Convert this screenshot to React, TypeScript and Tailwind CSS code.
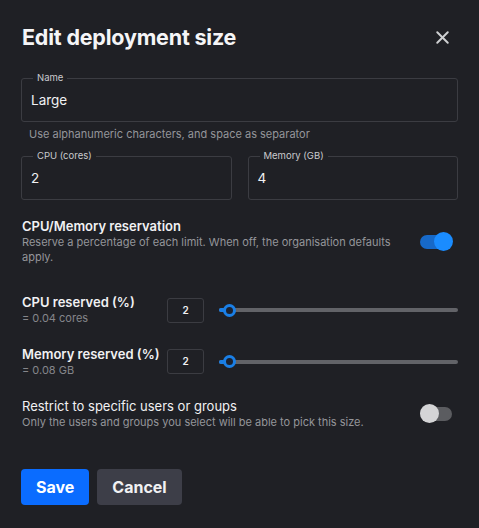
import React, { useState } from 'react';
import { X } from 'lucide-react';

const font = { fontFamily: 'Inter, "Noto Sans", sans-serif' };

const OutlinedField: React.FC<{ label: string; value: string }> = ({ label, value }) => (
  <div className="relative h-[44px] rounded-[3px] border border-[#3b3c42] flex items-center px-[9px]">
    <span className="absolute -top-[7px] left-[11px] bg-[#1f2025] px-[4px] text-[9.5px] leading-[12px] text-[#c9cace]">
      {label}
    </span>
    <span className="text-[13.5px] text-[#f1f1f3]">{value}</span>
  </div>
);

const Toggle: React.FC<{ on: boolean; onClick: () => void }> = ({ on, onClick }) => (
  <button onClick={onClick} className="relative w-[34px] h-[20px] flex items-center shrink-0">
    <span className={`block w-[32px] h-[14px] rounded-full ${on ? 'bg-[#1769c8]' : 'bg-[#5b5c60]'}`} />
    <span
      className={`absolute top-0 w-[19px] h-[19px] rounded-full ${on ? 'left-[14px] bg-[#1a8cff]' : 'left-0 bg-[#d4d4d6]'}`}
    />
  </button>
);

const ReserveRow: React.FC<{ label: string; sub: string; value: string }> = ({ label, sub, value }) => (
  <div className="flex items-center">
    <div className="w-[145px] shrink-0">
      <div className="text-[13px] font-semibold leading-[17px] text-[#f1f1f3]">{label}</div>
      <div className="text-[11px] leading-[15px] text-[#85868b]">{sub}</div>
    </div>
    <div className="w-[37px] h-[25px] rounded-[3px] border border-[#3b3c42] flex items-center justify-center text-[10px] font-semibold text-[#f1f1f3] shrink-0">
      {value}
    </div>
    <div className="relative flex-1 ml-[15px] h-[14px] flex items-center">
      <div className="w-full h-[4px] rounded-full bg-[#626368]" />
      <div className="absolute left-0 w-[10px] h-[4px] rounded-full bg-[#1a7fe6]" />
      <div className="absolute left-[4px] w-[13px] h-[13px] rounded-full border-[3px] border-[#1a7fe6] bg-[#1b2230]" />
    </div>
  </div>
);

const App: React.FC = () => {
  const [reserve, setReserve] = useState(true);
  const [restrict, setRestrict] = useState(false);

  return (
    <div style={font} className="w-[479px] h-[528px] bg-[#1f2025] text-white overflow-hidden">
      <div className="px-[21px] pt-[21px]">
        <div className="flex items-center justify-between h-[32px]">
          <h1 className="text-[21.5px] font-bold tracking-[-0.2px] text-[#f5f5f7] pl-[1px]">Edit deployment size</h1>
          <X size={21} strokeWidth={2.25} className="text-[#cfd0d3] mr-[5px]" />
        </div>

        <div className="mt-[25px]">
          <OutlinedField label="Name" value="Large" />
          <p className="mt-[4.5px] pl-[8px] text-[11px] leading-[15px] text-[#94959a]">
            Use alphanumeric characters, and space as separator
          </p>
        </div>

        <div className="mt-[14.5px] grid grid-cols-2 gap-[16px]">
          <OutlinedField label="CPU (cores)" value="2" />
          <OutlinedField label="Memory (GB)" value="4" />
        </div>

        <div className="mt-[18px] flex items-center justify-between pl-[1px]">
          <div className="w-[385px]">
            <div className="text-[13px] font-semibold leading-[17px] text-[#f1f1f3]">CPU/Memory reservation</div>
            <div className="text-[11px] leading-[15px] text-[#94959a]">
              Reserve a percentage of each limit. When off, the organisation defaults apply.
            </div>
          </div>
          <div className="mr-[4px]">
            <Toggle on={reserve} onClick={() => setReserve(!reserve)} />
          </div>
        </div>

        <div className="mt-[29px] pl-[1px] flex flex-col gap-[19.5px]">
          <ReserveRow label="CPU reserved (%)" sub="= 0.04 cores" value="2" />
          <ReserveRow label="Memory reserved (%)" sub="= 0.08 GB" value="2" />
        </div>

        <div className="mt-[20.5px] flex items-center justify-between pl-[1px]">
          <div>
            <div className="text-[13px] leading-[17px] text-[#f1f1f3]">Restrict to specific users or groups</div>
            <div className="text-[11px] leading-[15px] text-[#94959a]">
              Only the users and groups you select will be able to pick this size.
            </div>
          </div>
          <div className="mr-[4px]">
            <Toggle on={restrict} onClick={() => setRestrict(!restrict)} />
          </div>
        </div>

        <div className="mt-[38.5px] flex gap-[8px]">
          <button className="h-[36px] px-[15px] rounded-[4px] bg-[#0a6cff] text-[16px] font-bold text-white">Save</button>
          <button className="h-[36px] px-[15px] rounded-[4px] bg-[#3d3e48] text-[16px] font-bold text-[#f1f1f3]">Cancel</button>
        </div>
      </div>
    </div>
  );
};

export default App;
